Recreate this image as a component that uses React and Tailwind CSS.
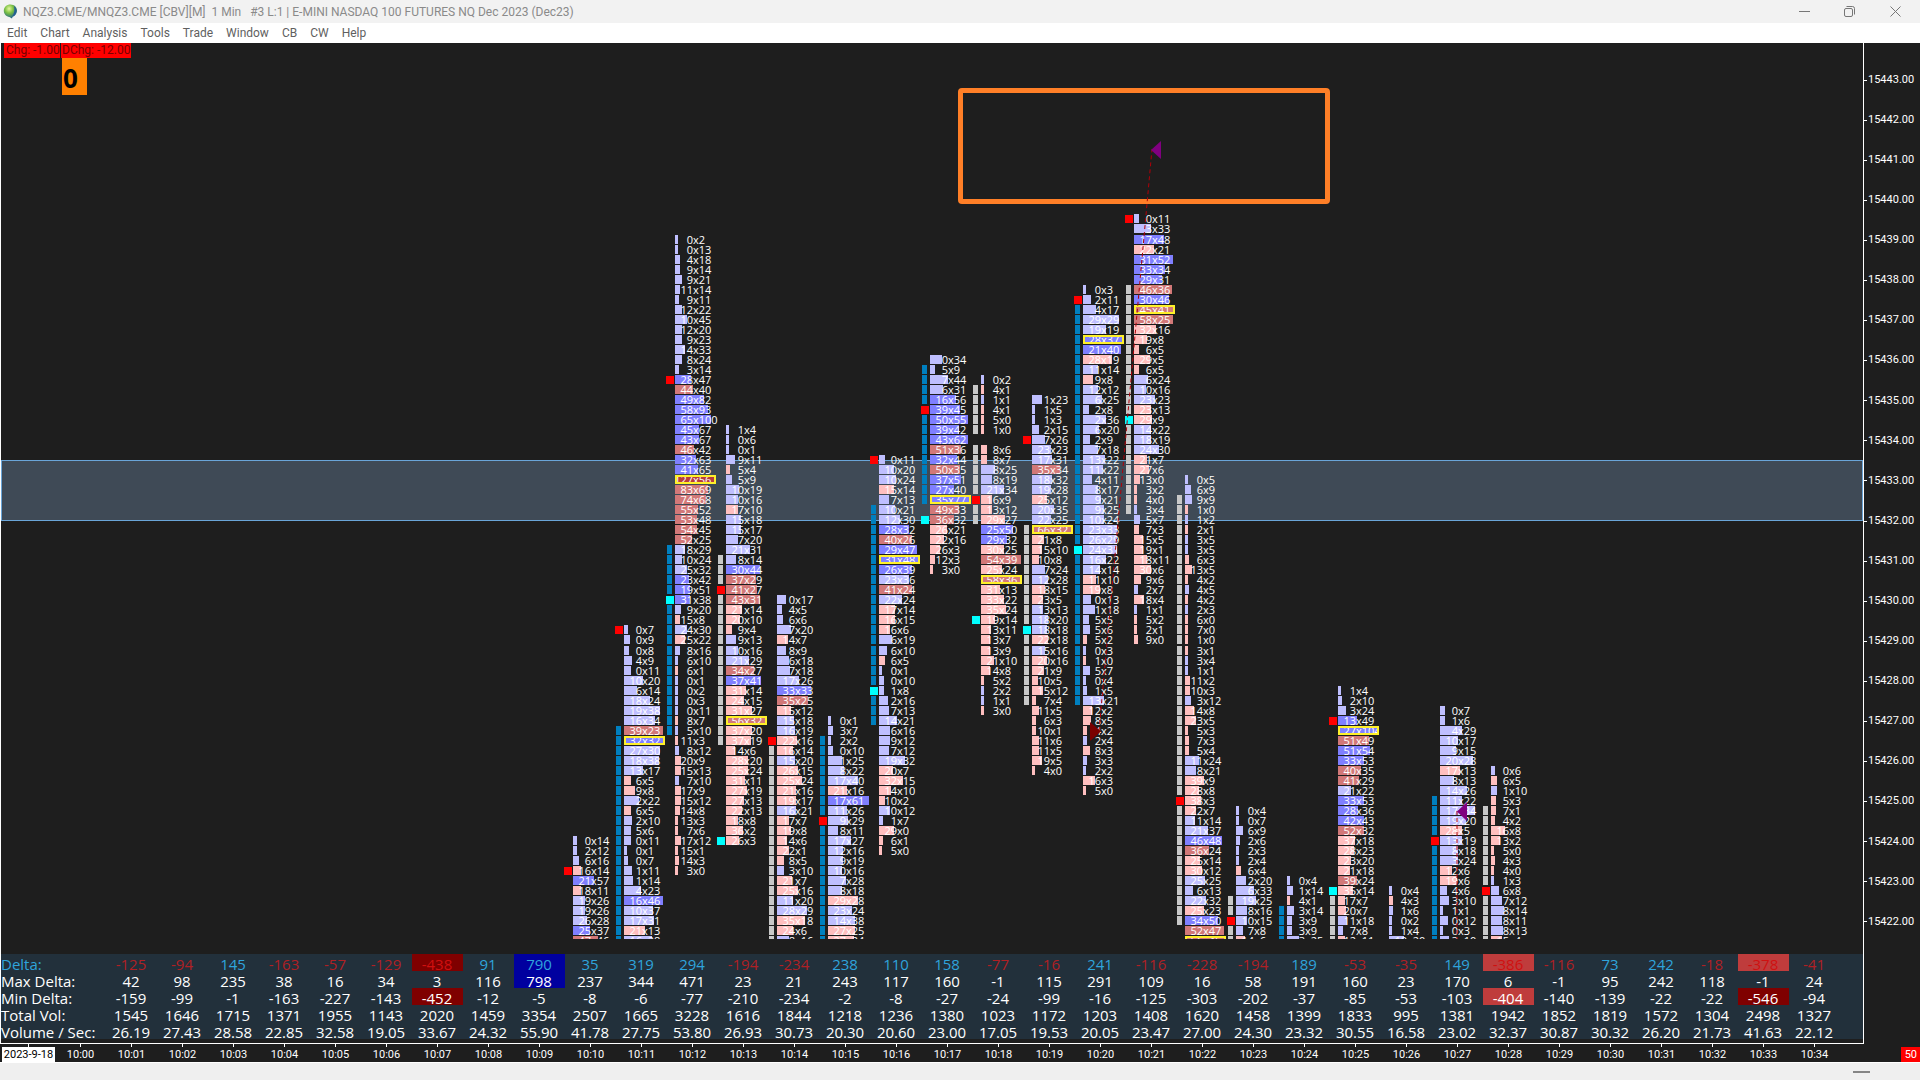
import React from "react";

const FIRST_ROW_OFFSET = 171;
const LAST_ROW = 72;

const clusters = [
  { time: "10:10", start: 62, max: 150, high: 65, rows: "0x14 2x12 6x16 16x14 21x57 18x11 19x26 19x26 26x28 25x37 47x46" },
  { time: "10:11", start: 41, max: 64, high: 41, poc: 52, strip: "blue", spans: [[51, 72]], rows: "0x7 0x9 0x8 4x9 0x11 10x20 6x14 18x24 19x38 16x34 39x23 32x32 27x30 18x38 13x17 6x5 9x8 2x22 6x5 2x10 5x6 0x11 0x1 0x7 1x11 1x14 4x23 16x46 10x37 17x31 21x13 16x28" },
  { time: "10:12", start: 2, max: 183, high: 16, low: 38, poc: 26, strip: "blue", spans: [[33, 51]], rows: "0x2 0x13 4x18 9x14 9x21 11x14 9x11 12x22 10x45 12x20 9x23 14x33 8x24 3x14 28x47 44x40 49x82 58x93 65x100 45x67 43x67 46x42 32x63 41x65 127x56 83x69 74x68 55x52 53x48 54x45 52x25 18x29 10x24 25x32 23x42 19x51 31x38 9x20 15x8 24x30 25x22 8x16 6x10 6x1 0x1 0x2 0x3 0x11 8x7 5x10 11x3 8x12 20x9 15x13 7x10 17x9 15x12 14x8 13x3 7x6 17x12 15x1 14x3 3x0" },
  { time: "10:13", start: 21, max: 88, high: 37, low: 62, poc: 50, strip: "gray", spans: [[34, 52]], rows: "1x4 0x6 0x1 9x11 5x4 5x9 10x19 10x16 17x10 15x18 15x17 7x20 21x31 8x14 30x44 37x29 41x27 43x31 21x14 20x10 9x4 9x13 10x16 21x29 34x27 37x41 31x14 24x15 31x27 56x32 37x20 37x19 14x6 28x20 25x24 31x11 27x19 27x13 22x13 18x8 36x2 26x3" },
  { time: "10:14", start: 38, max: 77, high: 52, strip: "gray", spans: [[52, 72]], rows: "0x17 4x5 6x6 7x20 14x7 8x9 6x18 7x18 17x26 33x33 35x25 15x12 15x18 16x19 22x16 16x14 15x20 26x15 25x24 21x16 19x17 16x21 17x7 19x8 14x6 22x1 8x5 3x10 21x7 25x16 11x20 28x29 35x18 24x6 8x16" },
  { time: "10:15", start: 50, max: 77, high: 60, strip: "blue", spans: [[52, 72]], rows: "0x1 3x7 2x2 0x10 1x25 8x22 17x40 21x16 17x61 11x26 9x29 8x11 17x27 12x16 9x19 10x16 7x28 8x18 29x28 23x24 14x38 27x25 27x24" },
  { time: "10:16", start: 24, max: 79, high: 24, low: 47, poc: 34, strip: "blue", spans: [[29, 50]], rows: "0x11 10x20 10x24 15x14 7x13 10x21 12x30 28x32 40x26 29x47 31x48 26x39 23x36 41x24 22x24 17x14 16x15 16x6 6x19 6x10 6x5 0x1 0x10 1x8 2x16 7x13 14x21 6x16 9x12 7x12 19x32 20x7 32x15 14x10 10x2 10x12 1x7 29x0 6x1 5x0" },
  { time: "10:17", start: 14, max: 112, high: 19, low: 30, poc: 28, strip: "blue", spans: [[15, 28]], rows: "0x34 5x9 7x44 6x31 16x56 39x45 50x55 39x42 43x62 51x36 32x44 50x35 37x51 27x40 35x77 49x33 36x32 26x21 22x16 26x3 12x3 3x0" },
  { time: "10:18", start: 16, max: 94, high: 28, low: 40, poc: 36, strip: "gray", spans: [[17, 21], [23, 30]], rows: "0x2 4x1 1x1 4x1 5x0 1x0 - 8x6 8x7 8x25 8x19 21x34 16x9 13x12 29x27 25x50 29x32 30x25 54x39 25x24 58x36 31x13 33x22 35x24 19x14 13x11 13x7 13x9 21x10 14x8 5x2 2x2 1x1 3x0" },
  { time: "10:19", start: 18, max: 98, high: 22, low: 41, poc: 31, strip: "gray", spans: [[31, 48]], rows: "1x23 1x5 1x3 2x15 7x26 23x23 17x31 35x34 18x32 19x28 25x12 20x35 22x25 66x32 21x8 15x10 10x8 7x24 12x28 18x15 23x5 13x13 18x20 18x18 22x18 15x16 20x16 21x9 10x5 15x12 7x4 11x5 6x3 10x1 11x6 11x5 19x5 4x0" },
  { time: "10:20", start: 7, max: 65, high: 8, low: 33, poc: 12, strip: "blue", spans: [[8, 48]], rows: "0x3 2x11 4x17 29x29 19x19 28x37 21x40 28x19 11x14 9x8 12x12 6x25 2x8 2x36 6x20 2x9 7x18 13x22 11x22 4x11 8x17 9x21 9x25 10x24 23x33 26x29 24x31 16x22 14x14 11x10 19x8 0x13 1x18 5x5 5x6 5x2 0x3 1x0 5x7 0x4 1x5 13x21 12x2 8x5 4x2 2x4 8x3 3x3 2x2 16x3 5x0" },
  { time: "10:21", start: 0, max: 86, high: 0, low: 20, poc: 9, strip: "gray", spans: [[7, 29]], rows: "0x11 3x33 17x48 22x21 31x52 33x34 29x31 46x36 30x46 45x41 58x25 32x16 19x8 6x5 29x5 6x5 6x24 10x16 23x23 23x13 29x9 14x22 18x19 24x30 21x7 27x6 13x0 3x2 4x0 3x4 5x7 7x3 15x5 19x1 18x11 30x6 9x6 2x7 18x4 1x1 5x2 2x1 9x0" },
  { time: "10:22", start: 26, max: 101, high: 58, poc: 72, strip: "gray", spans: [[28, 70]], rows: "0x5 6x9 9x9 1x0 1x2 2x1 3x5 3x5 6x3 13x5 4x2 4x5 4x2 2x3 6x0 7x0 1x0 3x1 3x4 1x1 11x2 10x3 3x12 14x8 23x5 5x3 7x3 5x4 11x24 8x21 39x9 28x8 38x3 22x7 11x14 21x37 46x48 36x24 25x14 30x12 25x25 6x13 22x32 25x23 34x50 52x47 56x45" },
  { time: "10:23", start: 59, max: 88, high: 70, strip: "gray", spans: [[68, 72]], rows: "0x4 0x7 6x9 2x6 2x3 2x4 6x4 2x20 6x33 19x25 8x16 10x15 7x8 14x6" },
  { time: "10:24", start: 66, max: 95, strip: "blue", spans: [[69, 72]], rows: "0x4 1x14 4x1 3x14 3x9 3x9 3x25" },
  { time: "10:25", start: 47, max: 131, high: 50, low: 67, poc: 51, strip: "gray", spans: [[67, 72]], rows: "1x4 2x10 3x24 13x49 27x104 51x49 51x54 33x53 40x35 41x29 21x22 33x53 28x36 42x43 52x32 37x18 28x23 23x20 21x18 39x24 35x14 17x7 20x7 11x18 7x8 12x11" },
  { time: "10:26", start: 67, max: 80, rows: "0x4 4x3 1x6 0x2 1x4 10x20" },
  { time: "10:27", start: 49, max: 59, high: 62, strip: "blue", spans: [[58, 72]], rows: "0x7 1x6 4x29 10x17 9x15 20x28 17x13 8x13 14x26 11x22 17x34 19x20 28x5 13x19 8x18 3x24 12x6 19x6 4x6 3x10 1x1 0x12 0x3 3x10" },
  { time: "10:28", start: 55, max: 68, high: 67, strip: "gray", spans: [[59, 72]], rows: "0x6 6x5 1x10 5x3 7x1 4x2 16x8 13x2 5x0 4x3 4x0 1x3 6x8 7x12 8x14 8x11 8x13 15x4" },
];

const stats = [
  { label: "Delta:", values: [-125, -94, 145, -163, -57, -129, -438, 91, 790, 35, 319, 294, -194, -234, 238, 110, 158, -77, -16, 241, -116, -228, -194, 189, -53, -35, 149, -386, -116, 73, 242, -18, -378, -41] },
  { label: "Max Delta:", values: [42, 98, 235, 38, 16, 34, 3, 116, 798, 237, 344, 471, 23, 21, 243, 117, 160, -1, 115, 291, 109, 16, 58, 191, 160, 23, 170, 6, -1, 95, 242, 118, -1, 24] },
  { label: "Min Delta:", values: [-159, -99, -1, -163, -227, -143, -452, -12, -5, -8, -6, -77, -210, -234, -2, -8, -27, -24, -99, -16, -125, -303, -202, -37, -85, -53, -103, -404, -140, -139, -22, -22, -546, -94] },
  { label: "Total Vol:", values: [1545, 1646, 1715, 1371, 1955, 1143, 2020, 1459, 3354, 2507, 1665, 3228, 1616, 1844, 1218, 1236, 1380, 1023, 1172, 1203, 1408, 1620, 1458, 1399, 1833, 995, 1381, 1942, 1852, 1819, 1572, 1304, 2498, 1327] },
  { label: "Volume / Sec:", values: ["26.19", "27.43", "28.58", "22.85", "32.58", "19.05", "33.67", "24.32", "55.90", "41.78", "27.75", "53.80", "26.93", "30.73", "20.30", "20.60", "23.00", "17.05", "19.53", "20.05", "23.47", "27.00", "24.30", "23.32", "30.55", "16.58", "23.02", "32.37", "30.87", "30.32", "26.20", "21.73", "41.63", "22.12"] },
];

const menus = ["Edit", "Chart", "Analysis", "Tools", "Trade", "Window", "CB", "CW", "Help"];
const prices = Array.from({ length: 22 }, (_, i) => (15443 - i).toFixed(2));
const times = Array.from({ length: 35 }, (_, i) => "10:" + String(i).padStart(2, "0"));

const rowHeight = (r) => (r === 1 || r === 42 ? 11 : 10);

function offsetTo(row) {
  let y = FIRST_ROW_OFFSET;
  for (let r = 0; r < row; r++) y += rowHeight(r);
  return y;
}

function barColor(bid, ask) {
  const total = bid + ask;
  if (ask >= bid) return total >= 60 ? "bg-[#7f7fff]" : "bg-[#bfbfff]";
  if (total >= 170) return "bg-[#b83c3c]";
  return total >= 60 ? "bg-[#d27878]" : "bg-[#ffbfbf]";
}

function Quote({ bid, ask }) {
  return (
    <span className="relative flex whitespace-nowrap text-[11px] leading-[10px] text-white">
      <span className="flex w-[18px] justify-end">{bid}</span>
      <span>x{ask}</span>
    </span>
  );
}

function ClusterRow({ cluster, row, text }) {
  const inStrip = (cluster.spans || []).some(([a, b]) => row >= a && row <= b);
  const square = row === cluster.high ? "bg-[#ff0000]" : row === cluster.low ? "bg-[#00ffff]" : null;
  const quote = text && text !== "-" ? text.split("x").map(Number) : null;
  let body = null;
  if (quote) {
    const [bid, ask] = quote;
    const width = Math.max(3, Math.min(41, Math.round(((bid + ask) * 40) / cluster.max)));
    if (row === cluster.poc) {
      body = (
        <div className={"flex h-[9px] w-[41px] items-center overflow-hidden border-2 border-[#fff02a] " + barColor(bid, ask)}>
          <div className="-ml-[2px]"><Quote bid={bid} ask={ask} /></div>
        </div>
      );
    } else {
      body = (
        <div className="grid">
          <div className={"col-start-1 row-start-1 h-[9px] " + barColor(bid, ask)} style={{ width }} />
          <div className="col-start-1 row-start-1"><Quote bid={bid} ask={ask} /></div>
        </div>
      );
    }
  }
  return (
    <div className="flex" style={{ height: rowHeight(row) }}>
      <div className="flex h-[9px] w-[9px] shrink-0 items-center">
        {square ? (
          <div className={"h-2 w-2 " + square} />
        ) : inStrip ? (
          <div className={"ml-px h-[9px] w-[5px] " + (cluster.strip === "blue" ? "bg-[#007fbf]" : "bg-[#c8c8c8]")} />
        ) : null}
      </div>
      {body}
    </div>
  );
}

function Cluster({ cluster }) {
  const quotes = cluster.rows.split(" ");
  const end = Math.max(cluster.start + quotes.length - 1, ...(cluster.spans || []).map((s) => s[1]), cluster.low || 0);
  const rows = [];
  for (let r = cluster.start; r <= Math.min(end, LAST_ROW); r++) rows.push(r);
  return (
    <div className="w-[51px] shrink-0">
      <div style={{ height: offsetTo(cluster.start) }} />
      {rows.map((r) => (
        <ClusterRow key={r} cluster={cluster} row={r} text={quotes[r - cluster.start]} />
      ))}
    </div>
  );
}

function TitleBar() {
  return (
    <header className="flex h-[23px] items-center bg-[#f2f2f2] pr-[2px] font-[Roboto,'Open_Sans',sans-serif] text-xs text-[#8a8a8a]">
      <svg className="ml-[3px] h-[15px] w-[15px]" viewBox="0 0 15 15">
        <defs>
          <radialGradient id="orb" cx="40%" cy="30%" r="70%">
            <stop offset="0" stopColor="#e6f7a0" />
            <stop offset="0.45" stopColor="#7cc142" />
            <stop offset="1" stopColor="#1b5f8c" />
          </radialGradient>
        </defs>
        <path d="M7.5 0.5C11.5 0.5 14 3.3 14 6.6C14 10 11.5 12.4 9.6 12.8L9 14.6L6.4 12.9C3.2 12.6 0.8 10 0.8 6.8C0.8 3.2 3.6 0.5 7.5 0.5Z" fill="url(#orb)" />
        <path d="M11 2C13.4 3.8 14 6.4 13 9C12 11.4 10.6 12.4 9 12.8C11.4 9.6 12 6 11 2Z" fill="#245f95" />
      </svg>
      <h1 className="ml-[5px] flex-1 whitespace-pre">{"NQZ3.CME/MNQZ3.CME [CBV][M]  1 Min   #3 L:1 | E-MINI NASDAQ 100 FUTURES NQ Dec 2023 (Dec23)"}</h1>
      <div className="flex">
        <button aria-label="Minimize" className="flex h-[23px] w-[46px] items-center justify-center">
          <svg className="h-[11px] w-[11px]" viewBox="0 0 11 11"><path d="M0 5.5H11" stroke="#777" /></svg>
        </button>
        <button aria-label="Restore" className="flex h-[23px] w-[45px] items-center justify-center">
          <svg className="h-[11px] w-[11px]" viewBox="0 0 11 11" fill="none" stroke="#777"><rect x="0.5" y="2.5" width="8" height="8" rx="1.5" /><path d="M2.5 0.5H8.5Q10.5 0.5 10.5 2.5V8.5" /></svg>
        </button>
        <button aria-label="Close" className="flex h-[23px] w-[46px] items-center justify-center">
          <svg className="h-[11px] w-[11px]" viewBox="0 0 11 11"><path d="M0.5 0.5L10.5 10.5M10.5 0.5L0.5 10.5" stroke="#777" /></svg>
        </button>
      </div>
    </header>
  );
}

function MenuBar() {
  return (
    <nav className="flex h-5 items-center gap-[13px] bg-white pl-[7px] font-[Roboto,'Open_Sans',sans-serif] text-xs text-[#5f5f5f]">
      {menus.map((m) => (
        <button key={m}>{m}</button>
      ))}
    </nav>
  );
}

function Chart() {
  return (
    <main className="relative min-h-0 flex-1 overflow-hidden border-l border-white">
      <div className="absolute inset-x-0 top-[417px] h-[61px] border border-[#6aa5d8] bg-[#3f4a56]" />
      <div className="absolute left-[3px] top-0 font-[Roboto,'Open_Sans',sans-serif] text-xs leading-[15px] text-[#7a0000]">
        <div className="flex gap-px">
          <span className="w-[56px] whitespace-nowrap bg-[#ff0000] pl-[2px]">Chg: -1.00</span>
          <span className="w-[70px] whitespace-nowrap bg-[#ff0000] pl-px">DChg: -12.00</span>
        </div>
        <div className="ml-[58px] flex h-[37px] w-[25px] items-center bg-[#ff8000] pl-px pt-[3px] font-['Open_Sans',sans-serif] text-[26px] font-bold text-black">0</div>
      </div>
      <div className="relative h-[896px] overflow-hidden pl-[563px]">
        <div className="flex">
          {clusters.map((c) => (
            <Cluster key={c.time} cluster={c} />
          ))}
        </div>
      </div>
      <div className="absolute left-[957px] top-[45px] h-[116px] w-[372px] rounded-sm border-[5px] border-[#ff7f27]" />
      <svg className="absolute left-0 top-0 h-[896px] w-[1600px]" viewBox="0 0 1600 896" fill="none">
        <path d="M1098 688L1151 106M1456 768V896" stroke="#b00008" strokeDasharray="4 3" />
        <path d="M1089 679V698L1100 688.5Z" fill="#7a0000" />
        <path d="M1160 98V116L1150 107Z" fill="#800080" />
        <path d="M1466 759V778L1456 768.5Z" fill="#800080" />
      </svg>
    </main>
  );
}

function statClass(row, v) {
  if (row === 0) {
    if (v <= -400) return "bg-[#7f0000] text-[#d01010]";
    if (v <= -300) return "bg-[#bf3c3c] text-[#d01010]";
    if (v >= 700) return "bg-[#00009f] text-[#2fa4dc]";
    return v < 0 ? "text-[#b02024]" : "text-[#2fa4dc]";
  }
  if (row === 1) return v >= 700 ? "bg-[#00009f]" : "";
  if (row === 2) {
    if (v <= -450) return "bg-[#7f0000]";
    if (v <= -400) return "bg-[#bf3c3c]";
  }
  return "";
}

function StatsTable() {
  return (
    <table className="w-full table-fixed border-l border-white bg-[#22303b] text-[15px] leading-[14px] text-white">
      <colgroup>
        <col className="w-[105px]" />
        {times.slice(1).map((t) => (
          <col key={t} className="w-[51px]" />
        ))}
        <col />
      </colgroup>
      <tbody>
        {stats.map((s, i) => (
          <tr key={s.label} className="h-[17px]">
            <th scope="row" className={"whitespace-nowrap p-0 pt-[3px] text-left font-normal " + (i === 0 ? "text-[#2fa4dc]" : "")}>{s.label}</th>
            {s.values.map((v, k) => (
              <td key={k} className={"p-0 pt-[3px] text-center " + statClass(i, v)}>{v}</td>
            ))}
            <td className="p-0" />
          </tr>
        ))}
      </tbody>
    </table>
  );
}

function PriceAxis() {
  return (
    <aside className="w-[57px] shrink-0 border-l border-white pt-[17px] font-[Roboto,'Open_Sans',sans-serif] text-[11px] text-white">
      <ul className="grid h-[882px] grid-rows-[repeat(22,minmax(0,1fr))]">
        {prices.map((p) => (
          <li key={p} className="flex items-center gap-px">
            <span className="h-px w-[3px] bg-white" />
            {p}
          </li>
        ))}
      </ul>
    </aside>
  );
}

function TimeAxis() {
  return (
    <div className="flex h-[18px] font-[Roboto,'Open_Sans',sans-serif] text-[11px] leading-[15px] text-white">
      <div className="flex w-[55px] flex-col items-center pl-[2px]">
        <span className="h-[3px] w-px bg-white" />
        <span className="w-full bg-white text-center text-black">2023-9-18</span>
      </div>
      {times.map((t) => (
        <div key={t} className="flex w-[51px] shrink-0 flex-col items-center">
          <span className="h-[3px] w-px bg-white" />
          <span>{t}</span>
        </div>
      ))}
      <span className="ml-auto mt-[3px] h-[15px] bg-[#ff0000] pl-1 pr-[3px]">50</span>
    </div>
  );
}

export default function App() {
  return (
    <div className="flex h-screen flex-col overflow-hidden bg-[#1e1e1e] font-['Open_Sans','Noto_Sans',sans-serif]">
      <TitleBar />
      <MenuBar />
      <div className="flex min-h-0 flex-1">
        <div className="flex min-w-0 flex-1 flex-col">
          <Chart />
          <StatsTable />
          <div className="h-1 border-l border-white" />
        </div>
        <PriceAxis />
      </div>
      <div className="mr-14 h-px bg-white" />
      <TimeAxis />
      <footer className="flex h-[18px] items-center justify-end border-t border-white bg-[#efefef] pr-[50px]">
        <span className="h-[2px] w-[17px] bg-[#858585]" />
      </footer>
    </div>
  );
}
